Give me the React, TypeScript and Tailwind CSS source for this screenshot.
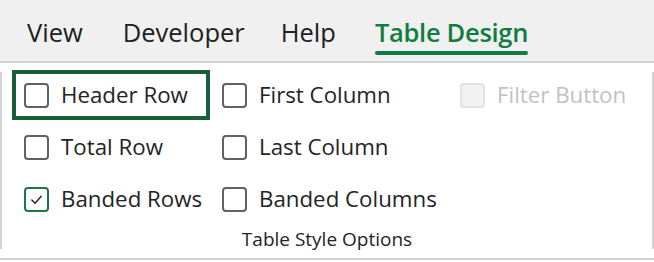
import React from "react";

const font = { fontFamily: '"Open Sans", "Noto Sans", sans-serif' };

function Box({ state }: { state: "off" | "on" | "disabled" }) {
  if (state === "on") {
    return (
      <div className="w-[25px] h-[25px] shrink-0 rounded-[4px] border-2 border-[#1a7a43] flex items-center justify-center bg-white">
        <svg width="15" height="15" viewBox="0 0 16 16" fill="none">
          <path d="M3 8.5 L6.5 12 L13 4.5" stroke="#242424" strokeWidth="1.5" strokeLinecap="round" strokeLinejoin="round" />
        </svg>
      </div>
    );
  }
  if (state === "disabled") {
    return <div className="w-[25px] h-[25px] shrink-0 rounded-[4px] border-2 border-[#e2e2e2] bg-[#f2f2f2]" />;
  }
  return <div className="w-[25px] h-[25px] shrink-0 rounded-[4px] border-2 border-[#616161] bg-white" />;
}

function Cell({
  label,
  state = "off",
  focused = false,
  width,
}: {
  label?: string;
  state?: "off" | "on" | "disabled";
  focused?: boolean;
  width: string;
}) {
  if (!label) return <div className={width} />;
  return (
    <div
      className={`${width} h-[50px] flex items-center gap-[12px] pl-[8px] border-4 ${
        focused ? "border-[#1b5e38]" : "border-transparent"
      }`}
    >
      <Box state={state} />
      <span
        className={`text-[22.3px] leading-none whitespace-nowrap ${
          state === "disabled" ? "text-[#c2c2c2]" : "text-[#242424]"
        }`}
      >
        {label}
      </span>
    </div>
  );
}

export default function App() {
  return (
    <div className="w-[654px] h-[262px] bg-white overflow-hidden flex flex-col" style={font}>
      <div className="h-[63px] shrink-0 bg-[#f0f0f0] border-b-2 border-[#d4d4d4] flex items-start pl-[27px] pt-[16px] text-[25.5px] text-[#202020]">
        <span className="leading-[32px]">View</span>
        <span className="leading-[32px] ml-[40px]">Developer</span>
        <span className="leading-[32px] ml-[36px]">Help</span>
        <div className="ml-[39px] flex flex-col items-stretch">
          <span className="leading-[32px] font-semibold text-[#107c41] tracking-[-0.3px]">Table Design</span>
          <div className="h-[4px] mt-[3px] rounded-full bg-[#107c41]" />
        </div>
      </div>
      <div className="flex flex-row h-[197px] shrink-0 border-b-2 border-[#d4d4d4]">
        <div className="w-[2px] h-[177px] mt-[9px] bg-[#d4d4d4] shrink-0" />
        <div className="flex-1 flex flex-col pt-[6px] pl-[10px]">
          <div className="flex flex-row items-center h-[52px]">
            <Cell width="w-[198px]" label="Header Row" focused />
            <Cell width="w-[238px]" label="First Column" />
            <Cell width="w-[190px]" label="Filter Button" state="disabled" />
          </div>
          <div className="flex flex-row items-center h-[52px]">
            <Cell width="w-[198px]" label="Total Row" />
            <Cell width="w-[238px]" label="Last Column" />
          </div>
          <div className="flex flex-row items-center h-[52px]">
            <Cell width="w-[198px]" label="Banded Rows" state="on" />
            <Cell width="w-[238px]" label="Banded Columns" />
          </div>
          <div className="flex justify-center pr-[10px] mt-[2px]">
            <span className="text-[19px] leading-[24px] text-[#242424]">Table Style Options</span>
          </div>
        </div>
        <div className="w-[2px] h-[177px] mt-[9px] bg-[#d4d4d4] shrink-0" />
      </div>
    </div>
  );
}
